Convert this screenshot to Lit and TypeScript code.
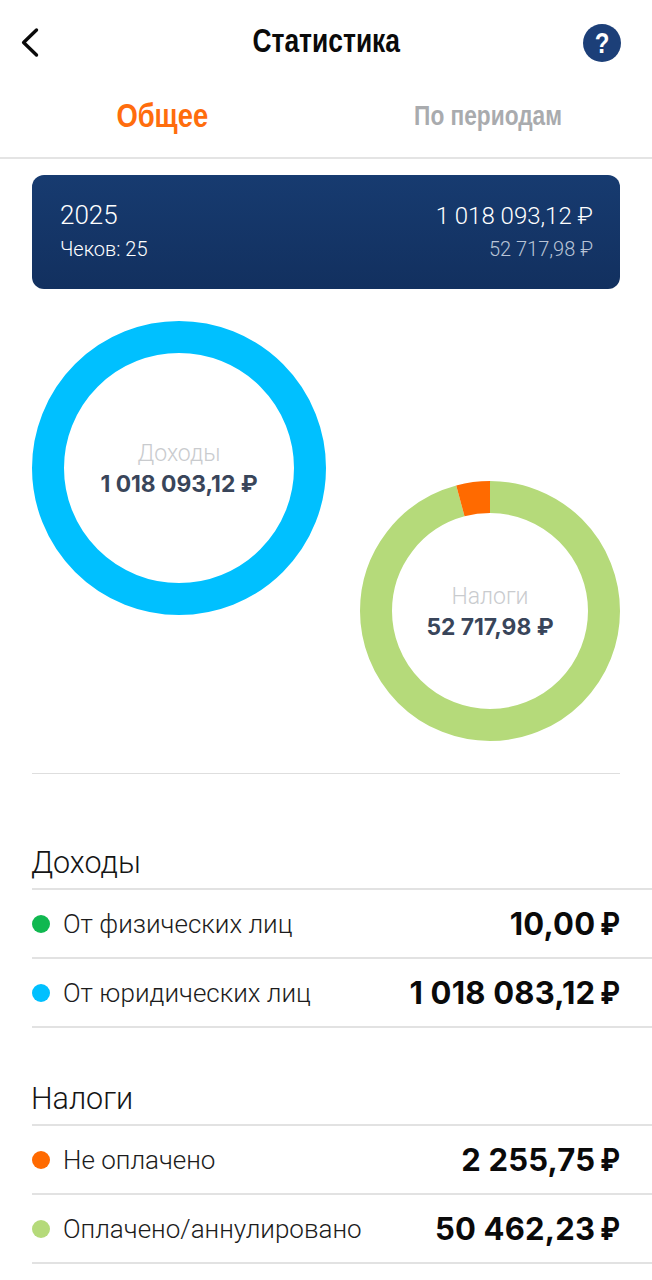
import { LitElement, html, css, svg } from "lit";
import { customElement } from "lit/decorators.js";

function donut(size: number, segs: { c: string; f: number }[]) {
  const sw = 32;
  const r = size / 2 - sw / 2;
  const len = 2 * Math.PI * r;
  let off = 0;
  return html`<svg class="ring" width=${size} height=${size} viewBox="0 0 ${size} ${size}">
    <g transform="rotate(-90 ${size / 2} ${size / 2})">
      ${segs.map((s) => {
        const el = svg`<circle cx=${size / 2} cy=${size / 2} r=${r} fill="none" stroke=${s.c} stroke-width=${sw}
          stroke-dasharray="${s.f * len} ${len}" stroke-dashoffset=${-off * len}></circle>`;
        off += s.f;
        return el;
      })}
    </g>
  </svg>`;
}

@customElement("app-root")
export class AppRoot extends LitElement {
  static styles = css`
    :host { display: block; width: 652px; height: 1280px; background: #fff; overflow: hidden; font-family: Roboto, "Liberation Sans", sans-serif; color: #111; }
    .top { display: grid; grid-template-columns: 1fr auto 1fr; align-items: center; height: 82px; padding: 0 31px; box-sizing: border-box; }
    .back { display: block; margin: 3px 0 0 -11px; }
    .cond { display: inline-block; font-family: "Liberation Sans", sans-serif; font-weight: 700; }
    .title { font-size: 33px; color: #0a0a0a; line-height: 36px; transform: scaleX(0.8); }
    .help { justify-self: end; width: 38px; height: 38px; border-radius: 50%; background: #1c3f78; color: #fff; display: flex; align-items: center; justify-content: center; margin-top: 4px; }
    .q { font-size: 30px; line-height: 38px; transform: scaleX(0.8); }
    .tabs { display: grid; grid-template-columns: 325px 326px; height: 75px; border-bottom: 2px solid #e4e4e4; }
    .tab { display: flex; justify-content: center; align-items: center; height: 68px; color: #a9abae; }
    .tab .cond { font-size: 27px; transform: scaleX(0.84); }
    .tab.on { color: #ff6d0d; }
    .tab.on .cond { font-size: 33px; transform: scaleX(0.83); }
    .wrap { padding: 16px 32px 0; }
    .card { height: 114px; border-radius: 12px; background: linear-gradient(180deg, #173b70, #12305f); color: #fff; padding: 26px 27px 0 28px; box-sizing: border-box; display: grid; grid-template-columns: 1fr auto; align-content: start; row-gap: 7px; align-items: baseline; }
    .y { font-size: 26px; line-height: 28px; font-weight: 300; }
    .sum { font-size: 24px; line-height: 28px; font-weight: 300; text-align: right; }
    .sub { font-size: 20px; line-height: 24px; color: #fff; font-weight: 300; }
    .sub.r { color: #b9c4d6; text-align: right; }
    .charts { display: flex; justify-content: space-between; align-items: flex-start; padding-top: 32px; height: 485px; box-sizing: border-box; border-bottom: 1px solid #dedede; }
    .chart { display: grid; }
    .chart > * { grid-area: 1 / 1; }
    .ring { display: block; }
    .small-chart { margin-top: 160px; }
    .label { display: flex; flex-direction: column; align-items: center; justify-content: center; padding-top: 4px; }
    .l1 { font-size: 23px; font-weight: 300; color: #c9cbce; line-height: 28px; }
    .l2 { font-family: Inter, Roboto, sans-serif; font-size: 22.8px; font-weight: 700; color: #39455a; line-height: 32px; }
    .sec { padding-left: 32px; }
    .h { font-size: 30.5px; font-weight: 300; line-height: 40px; color: #151515; height: 54px; display: flex; align-items: flex-end; padding-bottom: 5px; box-sizing: border-box; border-bottom: 2px solid #e2e2e2; }
    .h span { margin-left: -1px; }
    .s1 { margin-top: 62px; }
    .s2 { margin-top: 44px; }
    .row { height: 69px; box-sizing: border-box; border-bottom: 2px solid #e2e2e2; display: flex; align-items: center; padding-right: 32px; }
    .dot { width: 18px; height: 18px; border-radius: 50%; margin-right: 13px; flex: none; }
    .name { flex: 1; font-size: 26px; font-weight: 300; color: #1c1c1c; }
    .val { font-family: Inter, Roboto, sans-serif; font-size: 31px; font-weight: 700; color: #0a0a0a; letter-spacing: 0.2px; }
    .rub { display: inline-block; transform: scaleX(0.86); transform-origin: right center; margin-left: -6px; }
  `;

  row(color: string, name: string, val: string) {
    return html`<div class="row"><span class="dot" style="background:${color}"></span><span class="name">${name}</span><span class="val">${val} <span class="rub">₽</span></span></div>`;
  }

  render() {
    return html`
      <div class="top">
        <svg class="back" width="24" height="34" viewBox="0 0 24 34" fill="none"><path d="M16.5 4 L3.6 16.5 L16.5 29" stroke="#0a0a0a" stroke-width="3.4" stroke-linecap="round" stroke-linejoin="round"/></svg>
        <div class="cond title">Статистика</div>
        <div class="help"><span class="cond q">?</span></div>
      </div>
      <div class="tabs">
        <div class="tab on"><span class="cond">Общее</span></div>
        <div class="tab"><span class="cond">По периодам</span></div>
      </div>
      <div class="wrap">
        <div class="card">
          <div class="y">2025</div><div class="sum">1 018 093,12 ₽</div>
          <div class="sub">Чеков: 25</div><div class="sub r">52 717,98 ₽</div>
        </div>
        <div class="charts">
          <div class="chart">
            ${donut(294, [{ c: "#00c0ff", f: 1 }])}
            <div class="label"><div class="l1">Доходы</div><div class="l2">1 018 093,12 ₽</div></div>
          </div>
          <div class="chart small-chart">
            ${donut(260, [{ c: "#b5da7a", f: 0.9572 }, { c: "#ff6a00", f: 0.0428 }])}
            <div class="label"><div class="l1">Налоги</div><div class="l2">52 717,98 ₽</div></div>
          </div>
        </div>
      </div>
      <div class="sec s1">
        <div class="h"><span>Доходы</span></div>
        ${this.row("#10b850", "От физических лиц", "10,00")}
        ${this.row("#00c0ff", "От юридических лиц", "1 018 083,12")}
      </div>
      <div class="sec s2">
        <div class="h"><span>Налоги</span></div>
        ${this.row("#ff6a00", "Не оплачено", "2 255,75")}
        ${this.row("#b5da7a", "Оплачено/аннулировано", "50 462,23")}
      </div>
    `;
  }
}
